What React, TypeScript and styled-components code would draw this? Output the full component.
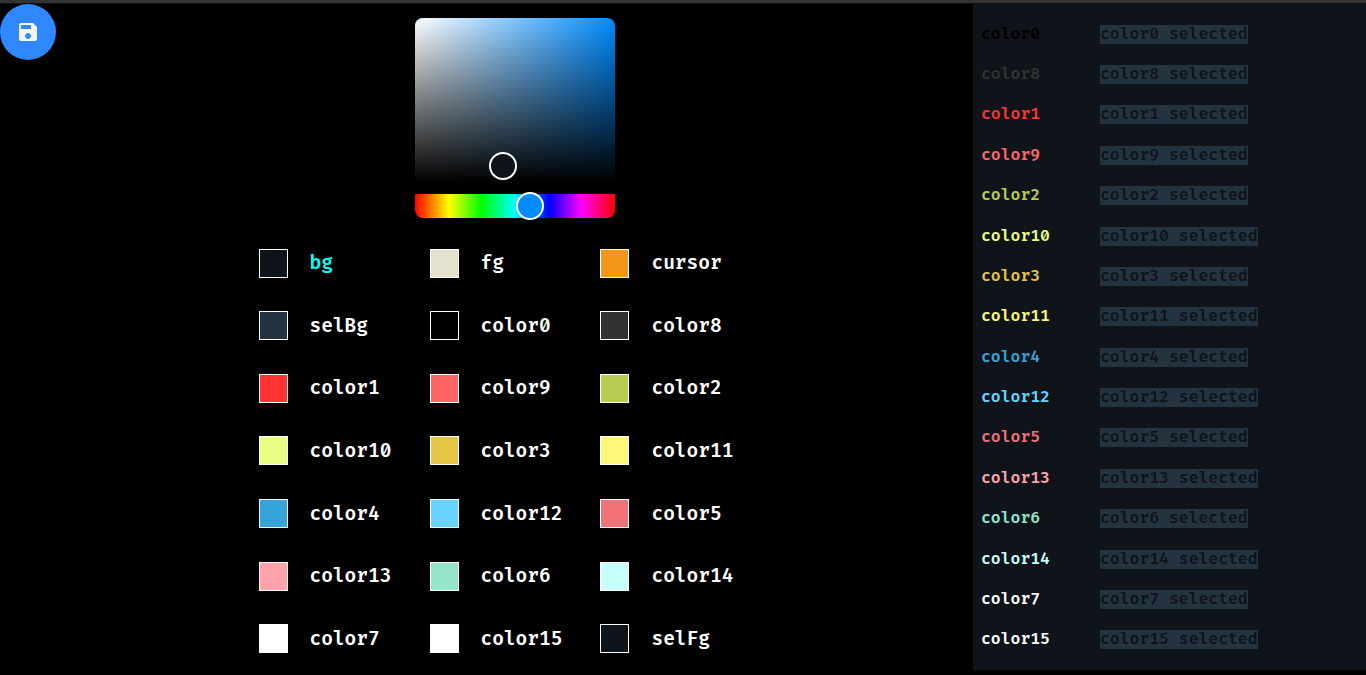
import React, { useState } from 'react';
import styled, { createGlobalStyle } from 'styled-components';
import { MdSave } from 'react-icons/md';

const swatches: [string, string][] = [
  ['bg', '#0f131a'],
  ['fg', '#e4e1ce'],
  ['cursor', '#f29718'],
  ['selBg', '#243340'],
  ['color0', '#000000'],
  ['color8', '#323232'],
  ['color1', '#ff3333'],
  ['color9', '#ff6565'],
  ['color2', '#b8cc52'],
  ['color10', '#e9fe83'],
  ['color3', '#e6c446'],
  ['color11', '#fff778'],
  ['color4', '#36a3d9'],
  ['color12', '#68d4ff'],
  ['color5', '#f07178'],
  ['color13', '#ffa3aa'],
  ['color6', '#95e5cb'],
  ['color14', '#c7fffc'],
  ['color7', '#ffffff'],
  ['color15', '#ffffff'],
  ['selFg', '#0f131a'],
];

const terminal = swatches.filter(([name]) => name.startsWith('color'));

const GlobalStyle = createGlobalStyle`
  * { box-sizing: border-box; }
  body {
    margin: 0;
    background: #000;
    color: #fff;
    font-family: "Fira Code", "Fira Mono", "DejaVu Sans Mono", monospace;
    font-weight: 600;
  }
`;

const Page = styled.div`
  display: flex;
  flex-direction: column;
  min-height: 100vh;
  padding-bottom: 5px;
`;

const TopBar = styled.header`
  height: 4px;
  background: #333;
  border-bottom: 1px solid #111;
`;

const Main = styled.main`
  flex: 1;
  display: flex;
`;

const SaveButton = styled.button`
  display: flex;
  flex: none;
  align-items: center;
  justify-content: center;
  width: 56px;
  height: 56px;
  padding: 0;
  border: 0;
  border-radius: 50%;
  background: #2f88ff;
  color: #f5f5f5;
  cursor: pointer;
`;

const Editor = styled.section`
  flex: 1;
  display: flex;
  flex-direction: column;
  align-items: center;
  padding: 14px 0 0 1px;
`;

const Picker = styled.div`
  display: flex;
  flex-direction: column;
  width: 200px;
  margin-bottom: 14px;
`;

const Saturation = styled.div`
  position: relative;
  height: 176px;
  border-bottom: 12px solid #000;
  border-radius: 8px 8px 0 0;
  background-color: #008cff;
  background-image: linear-gradient(0deg, #000, transparent),
    linear-gradient(90deg, #fff, rgba(255, 255, 255, 0));
`;

const Pointer = styled.div`
  position: absolute;
  left: 44%;
  top: 90%;
  width: 28px;
  height: 28px;
  transform: translate(-50%, -50%);
  border: 2px solid #fff;
  border-radius: 50%;
  background: #0f131a;
`;

const Hue = styled.input`
  z-index: 1;
  appearance: none;
  width: 100%;
  height: 28px;
  margin: -2px 0;
  background: transparent;

  &::-webkit-slider-runnable-track {
    height: 24px;
    border-radius: 0 0 8px 8px;
    background: linear-gradient(90deg, #f00 0%, #ff0 17%, #0f0 33%, #0ff 50%, #00f 67%, #f0f 83%, #f00 100%);
  }

  &::-webkit-slider-thumb {
    appearance: none;
    width: 28px;
    height: 28px;
    margin-top: -2px;
    border: 2px solid #fff;
    border-radius: 50%;
    background: #008cff;
  }
`;

const SwatchGrid = styled.div`
  flex: 1;
  display: grid;
  grid-template-columns: repeat(3, 1fr);
  grid-auto-rows: 1fr;
  width: 56%;
`;

const SwatchButton = styled.button<{ $active: boolean }>`
  display: flex;
  align-items: center;
  gap: 22px;
  padding: 0;
  border: 0;
  background: none;
  color: ${(p) => (p.$active ? '#00ffff' : '#ffffff')};
  font: inherit;
  font-size: 19px;
  cursor: pointer;
`;

const Chip = styled.span<{ $color: string }>`
  flex: none;
  width: 29px;
  height: 29px;
  border: 1px solid #fff;
  background: ${(p) => p.$color};
`;

const Preview = styled.aside`
  flex: 0 0 393px;
  display: flex;
  flex-direction: column;
  padding: 10px 8px;
  background: #0f131a;
  font-size: 16px;
  line-height: 19px;
`;

const PreviewRow = styled.div`
  flex: 1;
  display: grid;
  grid-template-columns: 119px 1fr;
  align-items: center;
  justify-items: start;
`;

const Sample = styled.span<{ $color: string }>`
  color: ${(p) => p.$color};
`;

const Selected = styled.span`
  background: #243340;
  color: #0f131a;
`;

export default function App() {
  const [active, setActive] = useState('bg');
  return (
    <Page>
      <GlobalStyle />
      <TopBar />
      <Main>
        <SaveButton aria-label="Save theme">
          <MdSave size={24} />
        </SaveButton>
        <Editor>
          <Picker>
            <Saturation>
              <Pointer />
            </Saturation>
            <Hue type="range" min={0} max={360} defaultValue={211} aria-label="Hue" />
          </Picker>
          <SwatchGrid>
            {swatches.map(([name, color]) => (
              <SwatchButton key={name} $active={name === active} onClick={() => setActive(name)}>
                <Chip $color={color} />
                {name}
              </SwatchButton>
            ))}
          </SwatchGrid>
        </Editor>
        <Preview>
          {terminal.map(([name, color]) => (
            <PreviewRow key={name}>
              <Sample $color={color}>{name}</Sample>
              <Selected>{name} selected</Selected>
            </PreviewRow>
          ))}
        </Preview>
      </Main>
    </Page>
  );
}
